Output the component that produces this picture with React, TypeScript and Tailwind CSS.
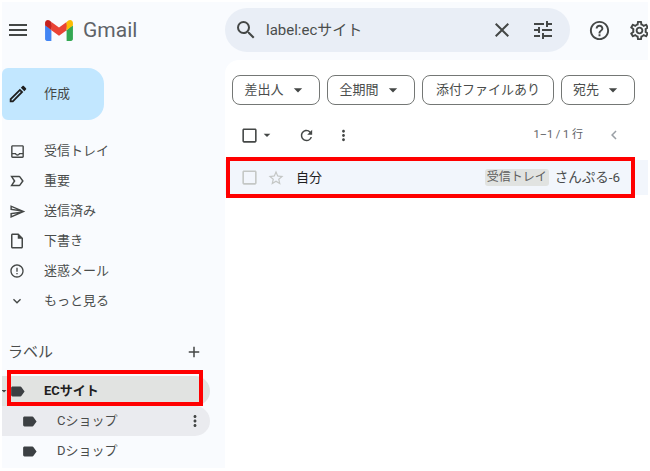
import React from 'react';
import {
  MdMenu, MdSearch, MdClose, MdTune, MdHelpOutline, MdOutlineSettings, MdRefresh, MdMoreVert,
  MdCheckBoxOutlineBlank, MdStarBorder, MdChevronLeft, MdExpandMore, MdAdd, MdLabel, MdOutlineEdit,
  MdArrowDropDown, MdErrorOutline,
} from 'react-icons/md';

type IconProps = { size?: number; className?: string };

const svgIcon = (d: string) => ({ size = 16, className }: IconProps) => (
  <svg width={size} height={size} viewBox="0 0 24 24" fill="currentColor" className={className}>
    <path d={d} />
  </svg>
);

const InboxIcon = svgIcon('M19 3H5c-1.1 0-2 .9-2 2v14c0 1.1.9 2 2 2h14c1.1 0 2-.9 2-2V5c0-1.1-.9-2-2-2zm0 16H5v-3h3.56c.69 1.19 1.97 2 3.44 2s2.75-.81 3.44-2H19v3zm0-5h-4.99c0 1.1-.9 2-2 2s-2-.9-2-2H5V5h14v9z');
const ImportantIcon = svgIcon('M15 19H3l4.5-7L3 5h12c.65 0 1.26.31 1.63.84L21 12l-4.37 6.16c-.37.52-.98.84-1.63.84zm-8.5-2H15l3.5-5L15 7H6.5l3.5 5-3.5 5z');
const SendIcon = svgIcon('M4.01 6.03l7.51 3.22-7.52-1 .01-2.22m7.5 8.72L4 17.97v-2.22l7.51-1M2.01 3L2 10l15 2-15 2 .01 7L23 12 2.01 3z');
const DraftIcon = svgIcon('M14 2H6c-1.1 0-1.99.9-1.99 2L4 20c0 1.1.89 2 1.99 2H18c1.1 0 2-.9 2-2V8l-6-6zM6 20V4h7v5h5v11H6z');

const GmailLogo = () => (
  <svg width="28" height="21" viewBox="0 0 256 193">
    <path fill="#4285F4" d="M58.182 192.05V93.14L27.507 65.077 0 49.504v125.091c0 9.658 7.825 17.455 17.455 17.455h40.727Z" />
    <path fill="#34A853" d="M197.818 192.05h40.727c9.659 0 17.455-7.826 17.455-17.455V49.505l-31.156 17.837-27.026 25.798v98.91Z" />
    <path fill="#EA4335" d="M58.182 93.14l-4.174-38.647 4.174-36.989L128 69.868l69.818-52.364 4.669 34.992-4.669 40.644L128 145.504z" />
    <path fill="#FBBC04" d="M197.818 17.504V93.14L256 49.504V26.231c0-21.585-24.64-33.89-41.89-20.945l-16.292 12.218Z" />
    <path fill="#C5221F" d="M0 49.504l26.759 20.07L58.182 93.14V17.504L41.89 5.286C24.61-7.66 0 4.646 0 26.23v23.273Z" />
  </svg>
);

const navItems = [
  { icon: InboxIcon, label: '受信トレイ', size: 17 },
  { icon: ImportantIcon, label: '重要', size: 18 },
  { icon: SendIcon, label: '送信済み', size: 17 },
  { icon: DraftIcon, label: '下書き', size: 18 },
  { icon: MdErrorOutline, label: '迷惑メール', size: 16 },
  { icon: MdExpandMore, label: 'もっと見る', size: 16 },
];

const chips = [
  { label: '差出人', w: 'w-[88px]', arrow: true },
  { label: '全期間', w: 'w-[88px]', arrow: true },
  { label: '添付ファイルあり', w: 'w-[132px]', arrow: false },
  { label: '宛先', w: 'w-[74px]', arrow: true },
];

export default function App() {
  return (
    <div className="h-[471px] w-[650px] overflow-hidden bg-white pl-[2px] pr-[2px] pt-[2px] pb-[3px] font-['Roboto','Noto_Sans_CJK_JP',sans-serif] text-[#4a4d4c]">
      <div className="flex h-full flex-col overflow-hidden bg-[#f9fbfe]">
        {/* Header */}
        <header className="flex h-[58px] shrink-0 items-center pb-[2px]">
          <div className="flex w-[223px] shrink-0 items-center">
            <MdMenu size={24} className="ml-[4px] text-[#444746]" />
            <div className="ml-[15px] flex"><GmailLogo /></div>
            <span className="ml-[10px] text-[21px] leading-none text-[#5f6368]">Gmail</span>
          </div>
          <div className="flex h-[44px] w-[345px] shrink-0 items-center rounded-full bg-[#e9eef6]">
            <MdSearch size={24} className="ml-[9px] text-[#444746]" />
            <span className="ml-[8px] flex-1 text-[15px]">label:ecサイト</span>
            <MdClose size={24} className="mr-[17px] text-[#444746]" />
            <MdTune size={24} className="mr-[15px] text-[#444746]" />
          </div>
          <MdHelpOutline size={23} className="ml-[18px] shrink-0 text-[#444746]" />
          <MdOutlineSettings size={23} className="ml-[17px] shrink-0 text-[#444746]" />
        </header>

        <div className="flex min-h-0 flex-1">
          {/* Sidebar */}
          <aside className="w-[223px] shrink-0">
            <button className="mt-[8px] flex h-[52px] w-[102px] items-center rounded-r-[16px] rounded-l-[6px] bg-[#c2e7ff] text-[13px] text-[#444746]">
              <MdOutlineEdit size={22} className="ml-[5px] text-[#1f1f1f]" />
              <span className="ml-[15px]">作成</span>
            </button>
            <nav className="mt-[16px]">
              {navItems.map(({ icon: Icon, label, size }) => (
                <div key={label} className="flex h-[30px] items-center text-[13px]">
                  <div className="ml-[7px] flex w-[16px] justify-center">
                    <Icon size={size} className="shrink-0 text-[#444746]" />
                  </div>
                  <span className="ml-[19px]">{label}</span>
                </div>
              ))}
            </nav>
            <div className="mt-[21px] flex h-[30px] items-center justify-between pl-[6px] pr-[22px] text-[15px]">
              <span>ラベル</span>
              <MdAdd size={18} className="text-[#444746]" />
            </div>
            <div className="relative mt-[9px] flex h-[30px] w-[208px] items-center rounded-r-full bg-[#e1e3e1] text-[13px] font-bold text-[#1f1f1f]">
              <MdArrowDropDown size={12} className="absolute left-[-4px] top-[9px] text-[#444746]" />
              <MdLabel size={17} className="ml-[7px] text-[#3c4043]" />
              <span className="ml-[18px]">ECサイト</span>
              <div className="absolute left-[5px] top-[-6px] h-[36px] w-[196px] border-[4px] border-[#ff0000]" />
            </div>
            <div className="flex h-[30px] w-[208px] items-center rounded-r-full bg-[#eaebef] text-[13px]">
              <MdLabel size={17} className="ml-[19px] text-[#3c4043]" />
              <span className="ml-[19px] flex-1">Cショップ</span>
              <MdMoreVert size={18} className="mr-[6px] text-[#444746]" />
            </div>
            <div className="flex h-[30px] items-center text-[13px]">
              <MdLabel size={17} className="ml-[19px] text-[#3c4043]" />
              <span className="ml-[19px]">Dショップ</span>
            </div>
          </aside>

          {/* Main panel */}
          <main className="flex-1 rounded-tl-[14px] bg-white">
            <div className="flex gap-[7px] pl-[7px] pt-[15px]">
              {chips.map((chip) => (
                <div
                  key={chip.label}
                  className={`flex h-[30px] items-center justify-center rounded-[8px] border border-[#747775] text-[13px] ${chip.w}`}
                >
                  <span>{chip.label}</span>
                  {chip.arrow && <MdArrowDropDown size={20} className="ml-[4px] text-[#444746]" />}
                </div>
              ))}
            </div>
            <div className="mt-[15px] flex h-[30px] items-center">
              <MdCheckBoxOutlineBlank size={19} className="ml-[15px] text-[#444746]" />
              <MdArrowDropDown size={16} className="text-[#444746]" />
              <MdRefresh size={17} className="ml-[23px] text-[#444746]" />
              <MdMoreVert size={17} className="ml-[20px] text-[#444746]" />
              <span className="ml-auto text-[11px] text-[#5f6368]">1–1 / 1 行</span>
              <MdChevronLeft size={18} className="ml-[22px] mr-[25px] text-[#9aa0a6]" />
            </div>
            <div className="relative mt-[10px] flex h-[35px] items-center bg-[#f2f6fc] text-[13px]">
              <MdCheckBoxOutlineBlank size={19} className="ml-[15px] text-[#c4c7c5]" />
              <MdStarBorder size={18} className="ml-[8px] text-[#c4c7c5]" />
              <span className="ml-[11px] text-[#1f1f1f]">自分</span>
              <span className="ml-auto rounded-[3px] bg-[#e1e3e1] px-[2px] text-[12px] leading-[17px] text-[#5e5e5e]">受信トレイ</span>
              <span className="ml-[6px] mr-[28px] text-[13.5px]">さんぷる-6</span>
              <div className="absolute left-[1px] top-[-3px] h-[41px] w-[409px] border-[4px] border-[#ff0000]" />
            </div>
          </main>
        </div>
      </div>
    </div>
  );
}
